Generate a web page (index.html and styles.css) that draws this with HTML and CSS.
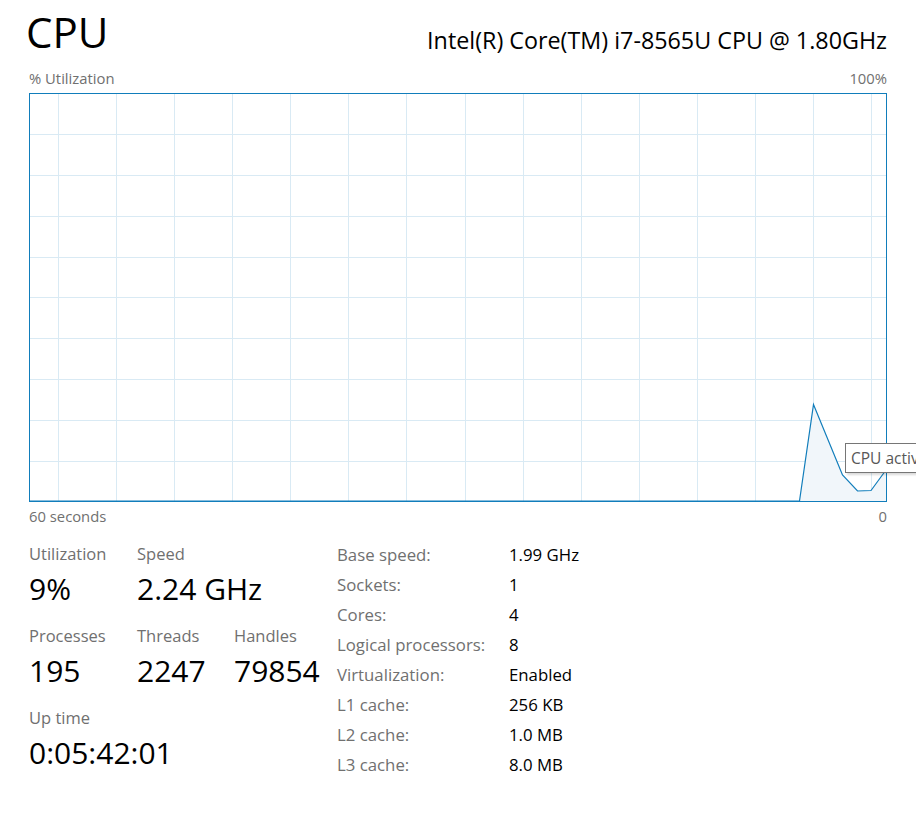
FILE: index.html
```html
<!DOCTYPE html>
<html>
<head>
<meta charset="utf-8">
<link rel="stylesheet" href="styles.css">
</head>
<body>
<div class="page">
  <div class="header">
    <div class="title">CPU</div>
    <div class="model">Intel(R) Core(TM) i7-8565U CPU @ 1.80GHz</div>
  </div>
  <div class="axis-top">
    <span>% Utilization</span>
    <span>100%</span>
  </div>
  <div class="graph">
    <svg width="858" height="409" viewBox="0 0 858 409">
      <g stroke="#d9eaf4" stroke-width="1">
        <line x1="29.5" y1="0" x2="29.5" y2="409"/>
        <line x1="87.5" y1="0" x2="87.5" y2="409"/>
        <line x1="145.5" y1="0" x2="145.5" y2="409"/>
        <line x1="203.5" y1="0" x2="203.5" y2="409"/>
        <line x1="261.5" y1="0" x2="261.5" y2="409"/>
        <line x1="319.5" y1="0" x2="319.5" y2="409"/>
        <line x1="377.5" y1="0" x2="377.5" y2="409"/>
        <line x1="436.5" y1="0" x2="436.5" y2="409"/>
        <line x1="494.5" y1="0" x2="494.5" y2="409"/>
        <line x1="552.5" y1="0" x2="552.5" y2="409"/>
        <line x1="610.5" y1="0" x2="610.5" y2="409"/>
        <line x1="668.5" y1="0" x2="668.5" y2="409"/>
        <line x1="726.5" y1="0" x2="726.5" y2="409"/>
        <line x1="784.5" y1="0" x2="784.5" y2="409"/>
        <line x1="842.5" y1="0" x2="842.5" y2="409"/>
        <line x1="0" y1="41.5" x2="858" y2="41.5"/>
        <line x1="0" y1="82.5" x2="858" y2="82.5"/>
        <line x1="0" y1="123.5" x2="858" y2="123.5"/>
        <line x1="0" y1="164.5" x2="858" y2="164.5"/>
        <line x1="0" y1="204.5" x2="858" y2="204.5"/>
        <line x1="0" y1="245.5" x2="858" y2="245.5"/>
        <line x1="0" y1="286.5" x2="858" y2="286.5"/>
        <line x1="0" y1="327.5" x2="858" y2="327.5"/>
        <line x1="0" y1="368.5" x2="858" y2="368.5"/>
      </g>
      <polygon points="770.5,408 784.5,311.5 813.5,382 828.5,398 842,397.5 857,377 857,408" fill="#f1f6fa"/>
      <polyline points="0,408 770.5,408 784.5,311.5 813.5,382 828.5,398 842,397.5 857,377" fill="none" stroke="#117dbb" stroke-width="1.2"/>
      <rect x="0.5" y="0.5" width="857" height="408" fill="none" stroke="#117dbb" stroke-width="1"/>
    </svg>
    <div class="tooltip">CPU activity</div>
  </div>
  <div class="axis-bottom">
    <span>60 seconds</span>
    <span>0</span>
  </div>
  <div class="stats">
    <div class="dyn">
      <div class="row">
        <div class="stat w108"><div class="label">Utilization</div><div class="value">9%</div></div>
        <div class="stat"><div class="label">Speed</div><div class="value">2.24 GHz</div></div>
      </div>
      <div class="row">
        <div class="stat w108"><div class="label">Processes</div><div class="value">195</div></div>
        <div class="stat w97"><div class="label">Threads</div><div class="value">2247</div></div>
        <div class="stat"><div class="label">Handles</div><div class="value">79854</div></div>
      </div>
      <div class="row">
        <div class="stat"><div class="label">Up time</div><div class="value">0:05:42:01</div></div>
      </div>
    </div>
    <div class="info">
      <div class="k">Base speed:</div><div class="v">1.99 GHz</div>
      <div class="k">Sockets:</div><div class="v">1</div>
      <div class="k">Cores:</div><div class="v">4</div>
      <div class="k">Logical processors:</div><div class="v">8</div>
      <div class="k">Virtualization:</div><div class="v">Enabled</div>
      <div class="k">L1 cache:</div><div class="v">256 KB</div>
      <div class="k">L2 cache:</div><div class="v">1.0 MB</div>
      <div class="k">L3 cache:</div><div class="v">8.0 MB</div>
    </div>
  </div>
</div>
</body>
</html>
```
FILE: styles.css
```css
html, body {
  margin: 0;
  padding: 0;
  background: #ffffff;
  overflow: hidden;
}
body {
  font-family: "Open Sans", "Noto Sans", "Liberation Sans", sans-serif;
  color: #000;
  width: 916px;
  height: 835px;
}
.page {
  padding: 0 29px 0 29px;
  width: 858px;
}
.header {
  display: flex;
  justify-content: space-between;
  align-items: flex-end;
  height: 64px;
}
.title {
  font-size: 42px;
  line-height: 42px;
  margin-left: -3px;
  padding-bottom: 11px;
}
.model {
  font-size: 23.3px;
  line-height: 28px;
  padding-bottom: 10px;
}
.axis-top, .axis-bottom {
  display: flex;
  justify-content: space-between;
  font-size: 14.8px;
  color: #707070;
}
.axis-top {
  height: 29px;
  line-height: 29px;
}
.axis-bottom {
  height: 30px;
  line-height: 30px;
  margin-top: -1px;
}
.graph {
  position: relative;
  height: 409px;
}
.graph svg {
  display: block;
}
.tooltip {
  position: absolute;
  left: 816px;
  top: 350px;
  height: 28px;
  line-height: 28px;
  padding: 0 6px 0 5px;
  border: 1px solid #767676;
  background: #ffffff;
  font-size: 15.5px;
  color: #575757;
  white-space: nowrap;
  box-shadow: 2px 2px 2px rgba(0,0,0,0.15);
}
.stats {
  display: flex;
  margin-top: 8px;
}
.dyn {
  width: 308px;
  display: flex;
  flex-direction: column;
}
.row {
  display: flex;
  height: 82px;
}
.stat {
  display: flex;
  flex-direction: column;
}
.w108 { width: 108px; }
.w97 { width: 97px; }
.label {
  font-size: 16.5px;
  color: #707070;
  line-height: 30px;
  height: 30px;
  white-space: nowrap;
}
.value {
  font-size: 30px;
  line-height: 40px;
  white-space: nowrap;
}
.info {
  display: grid;
  grid-template-columns: 172px auto;
  grid-auto-rows: 30px;
  align-items: center;
  font-size: 16.8px;
  white-space: nowrap;
}
.k { color: #707070; }
.v { color: #000; }
```
